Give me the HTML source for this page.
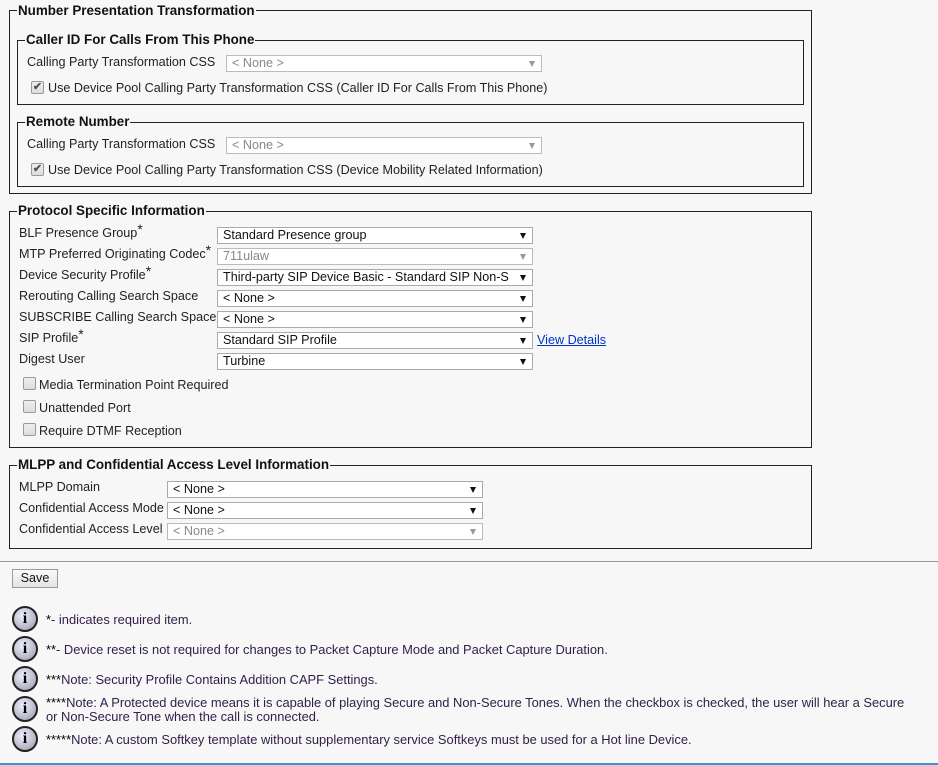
<!DOCTYPE html>
<html><head><meta charset="utf-8"><style>
body{margin:0;width:938px;height:765px;background:#f7f7f7;font-family:"Liberation Sans",Arial,sans-serif;font-size:12.6px;color:#222;position:relative;overflow:hidden}
.a{position:absolute;white-space:nowrap}
.fs{position:absolute;border:1px solid #222}
.lg{position:absolute;background:#f7f7f7;font-weight:bold;font-size:13.4px;color:#111;padding:0 1px;line-height:14px}
.sel{position:absolute;height:15px;border:1px solid #aaa;background:#fff;line-height:15px;padding-left:5px;box-sizing:content-box;color:#111;font-size:12.6px}
.sel.d{color:#888;border-color:#bbb}
.sel:after{content:"";position:absolute;right:6px;top:5px;border-left:3px solid transparent;border-right:3px solid transparent;border-top:6px solid #111}
.sel.d:after{border-top-color:#999}
.cb{position:absolute;width:11px;height:11px;border:1px solid #999;border-radius:2px;background:linear-gradient(#eee,#ddd)}
.ck{color:#555;font-size:11px;line-height:11px;text-align:center;font-weight:bold}
.ic{position:absolute;left:12px;width:22px;height:22px;border:2px solid #222;border-radius:50%;background:radial-gradient(circle at 40% 35%,#eef,#aab 80%);text-align:center;font:bold 16px/22px "Liberation Serif",serif;color:#000}
.n{position:absolute;left:46px;color:#33204a;font-size:12.9px}
sup{font-size:14px;vertical-align:3px;line-height:0}
</style></head><body>

<div class="fs" style="left:9px;top:10px;width:801px;height:182px"></div>
<div class="lg" style="left:17px;top:4px">Number Presentation Transformation</div>
<div class="fs" style="left:17px;top:40px;width:785px;height:63px"></div>
<div class="lg" style="left:25px;top:33px">Caller ID For Calls From This Phone</div>
<div class="a" style="left:27px;top:55px">Calling Party Transformation CSS</div>
<div class="sel d" style="left:226px;top:55px;width:309px">&lt; None &gt;</div>
<div class="cb ck" style="left:31px;top:81px">✔</div>
<div class="a" style="left:48px;top:81px">Use Device Pool Calling Party Transformation CSS (Caller ID For Calls From This Phone)</div>
<div class="fs" style="left:17px;top:122px;width:785px;height:63px"></div>
<div class="lg" style="left:25px;top:115px">Remote Number</div>
<div class="a" style="left:27px;top:137px">Calling Party Transformation CSS</div>
<div class="sel d" style="left:226px;top:137px;width:309px">&lt; None &gt;</div>
<div class="cb ck" style="left:31px;top:163px">✔</div>
<div class="a" style="left:48px;top:163px">Use Device Pool Calling Party Transformation CSS (Device Mobility Related Information)</div>

<div class="fs" style="left:9px;top:211px;width:801px;height:235px"></div>
<div class="lg" style="left:17px;top:204px">Protocol Specific Information</div>
<div class="a" style="left:19px;top:226px">BLF Presence Group<sup>*</sup></div>
<div class="sel" style="left:217px;top:227px;width:309px">Standard Presence group</div>
<div class="a" style="left:19px;top:247px">MTP Preferred Originating Codec<sup>*</sup></div>
<div class="sel d" style="left:217px;top:248px;width:309px">711ulaw</div>
<div class="a" style="left:19px;top:268px">Device Security Profile<sup>*</sup></div>
<div class="sel" style="left:217px;top:269px;width:309px">Third-party SIP Device Basic - Standard SIP Non-S</div>
<div class="a" style="left:19px;top:289px">Rerouting Calling Search Space</div>
<div class="sel" style="left:217px;top:290px;width:309px">&lt; None &gt;</div>
<div class="a" style="left:19px;top:310px">SUBSCRIBE Calling Search Space</div>
<div class="sel" style="left:217px;top:311px;width:309px">&lt; None &gt;</div>
<div class="a" style="left:19px;top:331px">SIP Profile<sup>*</sup></div>
<div class="sel" style="left:217px;top:332px;width:309px">Standard SIP Profile</div>
<div class="a" style="left:537px;top:333px;color:#0033cc;text-decoration:underline">View Details</div>
<div class="a" style="left:19px;top:352px">Digest User</div>
<div class="sel" style="left:217px;top:353px;width:309px">Turbine</div>
<div class="cb" style="left:23px;top:377px"></div>
<div class="a" style="left:39px;top:378px">Media Termination Point Required</div>
<div class="cb" style="left:23px;top:400px"></div>
<div class="a" style="left:39px;top:401px">Unattended Port</div>
<div class="cb" style="left:23px;top:423px"></div>
<div class="a" style="left:39px;top:424px">Require DTMF Reception</div>

<div class="fs" style="left:9px;top:465px;width:801px;height:82px"></div>
<div class="lg" style="left:17px;top:458px">MLPP and Confidential Access Level Information</div>
<div class="a" style="left:19px;top:480px">MLPP Domain</div>
<div class="sel" style="left:167px;top:481px;width:309px">&lt; None &gt;</div>
<div class="a" style="left:19px;top:501px">Confidential Access Mode</div>
<div class="sel" style="left:167px;top:502px;width:309px">&lt; None &gt;</div>
<div class="a" style="left:19px;top:522px">Confidential Access Level</div>
<div class="sel d" style="left:167px;top:523px;width:309px">&lt; None &gt;</div>

<div class="a" style="left:0;top:561px;width:938px;height:1px;background:#999"></div>
<div class="a" style="left:12px;top:569px;width:44px;height:17px;border:1px solid #999;background:linear-gradient(#fafafa,#e4e4e4);text-align:center;line-height:17px;color:#111">Save</div>

<div class="ic" style="top:606px">i</div>
<div class="n" style="top:612px"><span style="color:#000">*</span>- indicates required item.</div>
<div class="ic" style="top:636px">i</div>
<div class="n" style="top:642px"><span style="color:#000">**</span>- Device reset is not required for changes to Packet Capture Mode and Packet Capture Duration.</div>
<div class="ic" style="top:666px">i</div>
<div class="n" style="top:672px"><span style="color:#000">***</span>Note: Security Profile Contains Addition CAPF Settings.</div>
<div class="ic" style="top:696px">i</div>
<div class="n" style="top:696px;line-height:14px"><span style="color:#000">****</span>Note: A Protected device means it is capable of playing Secure and Non-Secure Tones. When the checkbox is checked, the user will hear a Secure<br>or Non-Secure Tone when the call is connected.</div>
<div class="ic" style="top:726px">i</div>
<div class="n" style="top:732px"><span style="color:#000">*****</span>Note: A custom Softkey template without supplementary service Softkeys must be used for a Hot line Device.</div>
<div class="a" style="left:0;top:763px;width:938px;height:2px;background:#4a90d0"></div>
</body></html>
